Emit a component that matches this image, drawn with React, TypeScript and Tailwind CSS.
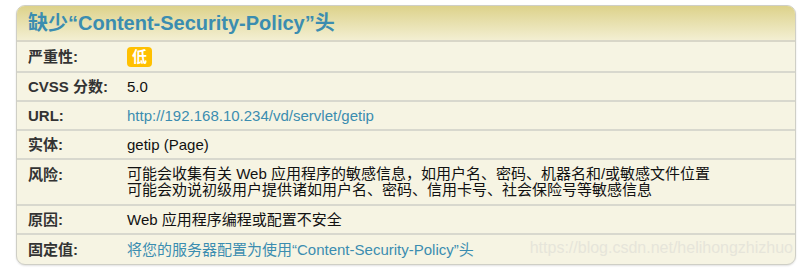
const rows: { label: string; value: React.ReactNode; tall?: boolean }[] = [
  {
    label: '严重性:',
    value: (
      <span className="inline-flex h-[20px] w-[25px] items-center justify-center rounded-[4px] bg-[#ffc000] text-[15px] font-bold text-white">
        低
      </span>
    ),
  },
  { label: 'CVSS 分数:', value: '5.0' },
  {
    label: 'URL:',
    value: <span className="text-[#3b8db0]">http://192.168.10.234/vd/servlet/getip</span>,
  },
  { label: '实体:', value: 'getip (Page)' },
  {
    label: '风险:',
    tall: true,
    value: (
      <>
        可能会收集有关 Web 应用程序的敏感信息，如用户名、密码、机器名和/或敏感文件位置
        <br />
        可能会劝说初级用户提供诸如用户名、密码、信用卡号、社会保险号等敏感信息
      </>
    ),
  },
  { label: '原因:', value: 'Web 应用程序编程或配置不安全' },
  {
    label: '固定值:',
    value: <span className="text-[#3b8db0]">将您的服务器配置为使用“Content-Security-Policy”头</span>,
  },
];

export default function App() {
  return (
    <div className="h-[269px] w-[802px] bg-white pl-[16px] pt-[5px] font-['Liberation_Sans','Noto_Sans_CJK_SC',sans-serif]">
      <div className="relative w-[780px] overflow-hidden rounded-[9px] border border-[#cfcfc6] bg-[#f6f4e3] shadow-[0_1px_2px_rgba(0,0,0,0.12)]">
        <div className="flex h-[36px] items-center border-b-2 border-[#d8d6c8] bg-gradient-to-b from-[#ddd28a] to-[#f3efd2] pl-[11px]">
          <h2 className="text-[20px] font-bold text-[#3b8db0]">缺少“Content-Security-Policy”头</h2>
        </div>
        {rows.map((r, i) => (
          <div
            key={r.label}
            className={`grid grid-cols-[110px_1fr] ${i < rows.length - 1 ? 'border-b-2 border-[#d8d8ce]' : ''} ${r.tall ? 'h-[46px] pt-[6px]' : i === 0 ? 'h-[31px] items-center' : 'h-[29px] items-center'}`}
          >
            <div className="pl-[11px] text-[15px] font-bold leading-[17px] text-[#333]">{r.label}</div>
            <div className="text-[15px] leading-[16px] text-[#111]">{r.value}</div>
          </div>
        ))}
        <div className="absolute bottom-[4px] right-[2px] text-[16px] text-[#e6e5da]">https://blog.csdn.net/helihongzhizhuo</div>
      </div>
    </div>
  );
}
